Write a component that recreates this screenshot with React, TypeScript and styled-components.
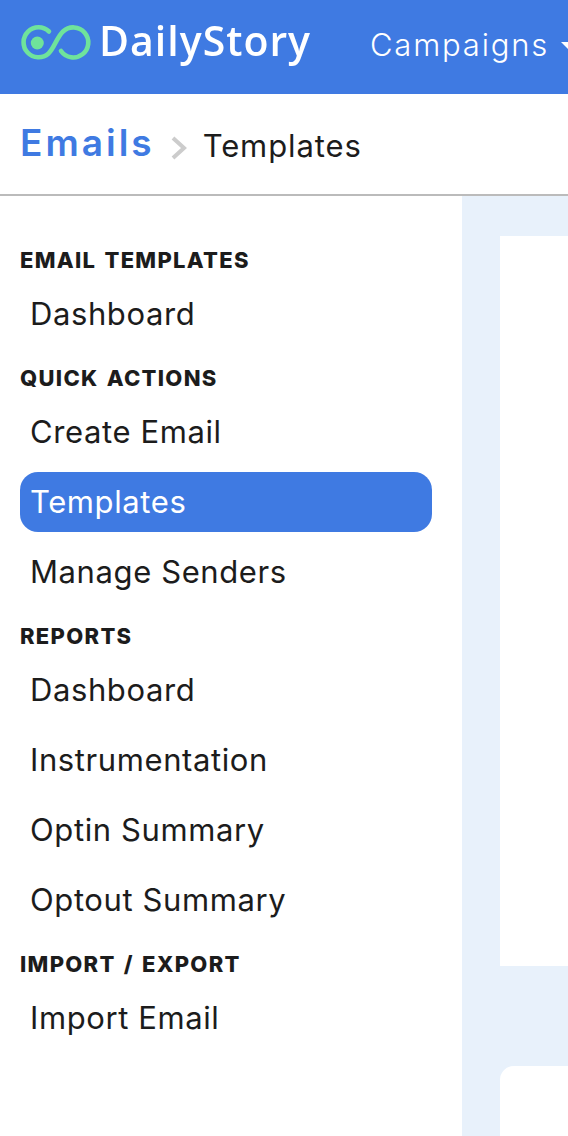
import React from 'react';
import styled, { createGlobalStyle } from 'styled-components';

const GlobalStyle = createGlobalStyle`
    html, body {
        margin: 0;
        padding: 0;
        background: #ffffff;
    }
    body {
        width: 568px;
        height: 1136px;
        overflow: hidden;
        font-family: "Inter", "Liberation Sans", sans-serif;
    }
`;

const sections = [
    { title: 'EMAIL TEMPLATES', items: ['Dashboard'] },
    { title: 'QUICK ACTIONS', items: ['Create Email', 'Templates', 'Manage Senders'] },
    { title: 'REPORTS', items: ['Dashboard', 'Instrumentation', 'Optin Summary', 'Optout Summary'] },
    { title: 'IMPORT / EXPORT', items: ['Import Email'] },
];

function Logo() {
    return (
        <LogoMark width="72" height="38" viewBox="0 0 72 38" fill="none">
            <path
                d="M29 7.500 A15 15 0 1 0 28.500 29.500 C34 24.500 37 13 43 7.500 A15 15 0 1 1 41 27"
                stroke="#6fe39b"
                strokeWidth="4.600"
                strokeLinecap="round"
            />
            <circle cx="17.300" cy="19" r="6.500" fill="#6fe39b" />
        </LogoMark>
    );
}

export default function App() {
    return (
        <>
            <GlobalStyle />
            <Page>
                <TopBar>
                    <Brand>
                        <Logo />
                        <BrandName>DailyStory</BrandName>
                    </Brand>
                    <TopMenu>
                        Campaigns
                        <Caret />
                    </TopMenu>
                </TopBar>
                <Breadcrumb>
                    <CrumbRoot>Emails</CrumbRoot>
                    <CrumbArrow width="16" height="24" viewBox="0 0 16 24" fill="none">
                        <path d="M2 2 L13 12 L2 22" stroke="#cccccc" strokeWidth="4" />
                    </CrumbArrow>
                    <CrumbCurrent>Templates</CrumbCurrent>
                </Breadcrumb>
                <Body>
                    <Sidebar>
                        {sections.map((section) => (
                            <Section key={section.title}>
                                <SectionTitle>{section.title}</SectionTitle>
                                {section.items.map((item) => (
                                    <NavItem key={item} $active={item === 'Templates'}>
                                        {item}
                                    </NavItem>
                                ))}
                            </Section>
                        ))}
                    </Sidebar>
                    <Main>
                        <ChartCard />
                        <ListCard />
                    </Main>
                </Body>
            </Page>
        </>
    );
}

const Page = styled.div`
    width: 568px;
    height: 1136px;
    display: flex;
    flex-direction: column;
    overflow: hidden;
`;

const TopBar = styled.header`
    height: 94px;
    flex: none;
    background: #3f7ae2;
    display: flex;
    align-items: center;
    padding-left: 20px;
    white-space: nowrap;
`;

const Brand = styled.div`
    display: flex;
    align-items: center;
    gap: 7px;
    width: 350px;
    flex: none;
    margin-top: -8px;
`;

const LogoMark = styled.svg`
    flex: none;
    filter: blur(0.4px);
`;

const BrandName = styled.span`
    font-family: "Open Sans", sans-serif;
    font-size: 41px;
    font-weight: 600;
    letter-spacing: 1px;
    color: #ffffff;
    filter: blur(0.7px);
    line-height: 50px;
    margin-top: -6px;
`;

const TopMenu = styled.div`
    display: flex;
    align-items: center;
    gap: 12px;
    color: #ffffff;
    font-size: 31px;
    font-weight: 300;
    letter-spacing: 1.800px;
    margin-top: -6px;
`;

const Caret = styled.span`
    width: 0;
    height: 0;
    border-left: 9px solid transparent;
    border-right: 9px solid transparent;
    border-top: 9px solid #ffffff;
    margin-top: 4px;
`;

const Breadcrumb = styled.div`
    height: 100px;
    flex: none;
    border-bottom: 2px solid #bbbbbb;
    background: #ffffff;
    display: flex;
    align-items: center;
    padding-left: 20px;
`;

const CrumbRoot = styled.span`
    color: #3f7ae2;
    font-size: 37px;
    font-weight: 600;
    letter-spacing: 3px;
    margin-right: 16px;
    margin-top: -4px;
`;

const CrumbArrow = styled.svg`
    flex: none;
    margin-top: 7px;
`;

const CrumbCurrent = styled.span`
    color: #1c1c1c;
    font-size: 31px;
    font-weight: 400;
    letter-spacing: 0.900px;
    margin-left: 16px;
    margin-top: 3px;
`;

const Body = styled.div`
    flex: 1;
    display: flex;
    min-height: 0;
`;

const Sidebar = styled.nav`
    width: 462px;
    flex: none;
    box-sizing: border-box;
    padding: 50px 30px 0 20px;
    background: #ffffff;
`;

const Section = styled.section`
    display: flex;
    flex-direction: column;
    gap: 10px;
    margin-bottom: 20px;
`;

const SectionTitle = styled.h3`
    margin: 0;
    height: 28px;
    line-height: 28px;
    font-size: 22px;
    font-weight: 800;
    letter-spacing: 1.300px;
    word-spacing: 2px;
    color: #1c1c1c;
`;

const NavItem = styled.a<{ $active?: boolean }>`
    display: flex;
    align-items: center;
    box-sizing: border-box;
    height: 60px;
    padding: 0 0 2px 10px;
    border-radius: 18px;
    font-size: 31px;
    font-weight: 400;
    letter-spacing: 0.600px;
    color: ${(p) => (p.$active ? '#ffffff' : '#1c1c1c')};
    background: ${(p) => (p.$active ? '#3f7ae2' : 'transparent')};
`;

const Main = styled.main`
    flex: 1;
    background: #e8f1fb;
    padding: 40px 0 0 38px;
    display: flex;
    flex-direction: column;
    gap: 100px;
`;

const ChartCard = styled.div`
    height: 730px;
    flex: none;
    background: #ffffff;
`;

const ListCard = styled.div`
    flex: 1;
    background: #ffffff;
    border-top-left-radius: 14px;
`;
